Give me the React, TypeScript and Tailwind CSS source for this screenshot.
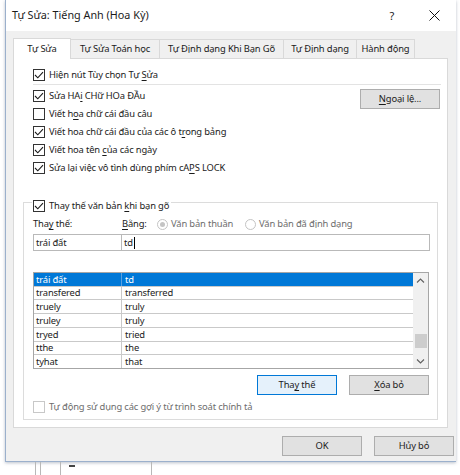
import type { ReactNode } from "react";

// Word's AutoCorrect dialog (Vietnamese UI), Windows 10 look.
const rows = [
  ["trái đất", "td"],
  ["transfered", "transferred"],
  ["truely", "truly"],
  ["truley", "truly"],
  ["tryed", "tried"],
  ["tthe", "the"],
  ["tyhat", "that"],
];

export default function App() {
  return (
    <div className="relative h-[475px] w-[460px] overflow-hidden whitespace-nowrap bg-white font-['Noto_Sans',sans-serif] text-[9.4px] leading-none tracking-[-0.15px] text-[#1b1b1b]">
      <div className="ml-[5px] flex h-[462px] w-[451px] flex-col border-b border-l border-[#9bb0cc] shadow-[0_1px_3px_rgba(60,80,110,0.35)]">
        {/* title bar */}
        <div className="flex h-[31px] shrink-0 items-center bg-white pl-[6px]">
          <span className="text-[10.8px] tracking-normal">Tự Sửa: Tiếng Anh (Hoa Kỳ)</span>
          <span className="ml-auto mr-[35px] text-[11px]">?</span>
          <svg width="11" height="11" viewBox="0 0 11 11" className="mr-[16px]">
            <path d="M0.5 0.5 L10.5 10.5 M10.5 0.5 L0.5 10.5" stroke="#111" strokeWidth="1" />
          </svg>
        </div>

        <div className="flex flex-1 flex-col bg-[#f0f0f0] pl-[7px] pt-[7px]">
          {/* tabs */}
          <div className="flex h-[20px] items-end">
            <div className="relative z-10 -mb-px flex h-[21px] w-[58px] items-center justify-center border border-b-0 border-[#d9d9d9] bg-white">
              Tự Sửa
            </div>
            <Tab w="w-[89px]">Tự Sửa Toán học</Tab>
            <Tab w="w-[124px]">Tự Định dạng Khi Bạn Gõ</Tab>
            <Tab w="w-[73px]">Tự Định dạng</Tab>
            <Tab w="w-[58px]">Hành động</Tab>
          </div>

          {/* tab page */}
          <div className="flex h-[370px] w-[435px] flex-col border border-[#d9d9d9] bg-white px-[9px] pt-[7px]">
            <div className="ml-[10px] mr-[-3px]">
              <CheckRow checked h="h-[18px]">
                Hiện nút Tùy chọn Tự <U>S</U>ửa
              </CheckRow>
              <div className="border-t border-[#e3e3e3]" />
              <div className="mt-[2px] flex">
                <div className="flex-1">
                  <CheckRow checked>
                    Sửa HA<U>i</U> CHữ HOa ĐẦu
                  </CheckRow>
                  <CheckRow>
                    Viết h<U>o</U>a chữ cái đầu câu
                  </CheckRow>
                  <CheckRow checked>
                    Viết hoa chữ cái đầu của các ô t<U>r</U>ong bảng
                  </CheckRow>
                  <CheckRow checked>
                    Viết hoa tên <U>c</U>ủa các ngày
                  </CheckRow>
                  <CheckRow checked>
                    Sửa lại việc vô tình dùng phím cA<U>P</U>S LOCK
                  </CheckRow>
                </div>
                <Btn className="mr-px mt-[2px]">
                  <U>N</U>goại lệ...
                </Btn>
              </div>
            </div>

            {/* replace group */}
            <div className="mt-[25px] flex h-[218px] flex-col border border-[#dcdcdc] pl-[9px] pr-[8px]">
              <div className="-ml-[1px] -mt-[5px] flex h-[15px] w-fit items-center gap-[4px] bg-white pl-px pr-[2px]">
                <Box checked />
                <span>
                  Thay thế văn bản <U>k</U>hi bạn gõ
                </span>
              </div>

              <div className="mt-[3px] flex h-[16px] items-center">
                <span className="w-[89px]">
                  Tha<U>y</U> thế:
                </span>
                <span className="w-[35px]">
                  <U>B</U>ằng:
                </span>
                <span className="flex w-[88px] items-center gap-[3px] text-[#6d6d6d]">
                  <Radio checked />
                  Văn bản thuần
                </span>
                <span className="flex items-center gap-[3px] text-[#6d6d6d]">
                  <Radio />
                  Văn bản đã định dạng
                </span>
              </div>

              <div className="mr-[-1px] mt-[2px] flex h-[17px]">
                <div className="flex w-[89px] items-center border border-[#b9b9b9] pl-[2px]">trái đất</div>
                <div className="flex flex-1 items-center border border-l-0 border-[#b9b9b9] pl-[2px]">
                  td<span className="ml-px h-[12px] w-px bg-black" />
                </div>
              </div>

              {/* list */}
              <div className="mt-[21px] flex h-[97px] border border-[#a6a6a6]">
                <div className="flex flex-1 flex-col">
                  {rows.map(([a, b], i) => (
                    <div
                      key={a}
                      className={`flex flex-1 ${i < rows.length - 1 ? "border-b border-[#c9c9c9]" : ""} ${
                        i === 0 ? "bg-[#0078d7] text-white" : ""
                      }`}
                    >
                      <span className={`flex w-[88px] items-center border-r pl-[2px] ${i === 0 ? "border-[#5aa0e0]" : "border-[#c9c9c9]"}`}>
                        {a}
                      </span>
                      <span className="flex flex-1 items-center pl-[3px]">{b}</span>
                    </div>
                  ))}
                </div>
                <div className="flex w-[15px] flex-col items-center bg-[#f0f0f0]">
                  <svg width="9" height="14" viewBox="0 0 9 14" className="mt-px">
                    <path d="M1 8.5 L4.5 5 L8 8.5" fill="none" stroke="#606060" strokeWidth="1.1" />
                  </svg>
                  <div className="mt-[46px] h-[14px] w-[12px] bg-[#cdcdcd]" />
                  <svg width="9" height="14" viewBox="0 0 9 14" className="mt-auto">
                    <path d="M1 5.5 L4.5 9 L8 5.5" fill="none" stroke="#606060" strokeWidth="1.1" />
                  </svg>
                </div>
              </div>

              <div className="mt-[6px] flex justify-end gap-[12px]">
                <Btn primary>
                  Tha<U>y</U> thế
                </Btn>
                <Btn>
                  <U>X</U>óa bỏ
                </Btn>
              </div>

              <div className="mt-[5px] flex h-[14px] items-center gap-[4px] text-[#6d6d6d]">
                <Box disabled />
                <span>Tự động sử dụng các gợi ý từ trình soát chính tả</span>
              </div>
            </div>
          </div>

          {/* footer */}
          <div className="mt-[8px] flex w-[441px] justify-end gap-[12px]">
            <Btn>OK</Btn>
            <Btn>Hủy bỏ</Btn>
          </div>
        </div>
      </div>

      {/* bits of the window behind */}
      <div className="flex h-[13px]">
        <span className="ml-[35px] h-full w-px bg-[#b8b8b8]" />
        <span className="ml-[4px] h-full w-px bg-[#b8b8b8]" />
        <span className="ml-[19px] h-full w-px bg-[#b8b8b8]" />
        <span className="ml-[8px] mt-[3px] h-[2px] w-[6px] bg-[#444]" />
        <span className="ml-[76px] h-full w-px bg-[#b8b8b8]" />
      </div>
    </div>
  );
}

function U({ children }: { children: ReactNode }) {
  return <span className="underline underline-offset-2">{children}</span>;
}

function Tab({ w, children }: { w: string; children: ReactNode }) {
  return (
    <div className={`flex h-[19px] ${w} items-center justify-center border border-b-0 border-l-0 border-[#d9d9d9] bg-[#f0f0f0]`}>
      {children}
    </div>
  );
}

function Box({ checked = false, disabled = false }: { checked?: boolean; disabled?: boolean }) {
  return (
    <span
      className={`flex h-[12px] w-[12px] shrink-0 items-center justify-center border bg-white ${
        disabled ? "border-[#c8c8c8]" : "border-[#333333]"
      }`}
    >
      {checked && (
        <svg width="10" height="10" viewBox="0 0 10 10" fill="none">
          <path d="M1 5 L3.8 7.8 L9 2.2" stroke="#1a1a1a" strokeWidth="1.1" />
        </svg>
      )}
    </span>
  );
}

function CheckRow({
  checked = false,
  h = "h-[18px]",
  children,
}: {
  checked?: boolean;
  h?: string;
  children: ReactNode;
}) {
  return (
    <div className={`flex ${h} items-center gap-[4px]`}>
      <Box checked={checked} />
      <span>{children}</span>
    </div>
  );
}

function Radio({ checked = false }: { checked?: boolean }) {
  return (
    <span className="flex h-[11px] w-[11px] shrink-0 items-center justify-center rounded-full border border-[#c4c4c4] bg-white">
      {checked && <span className="h-[5px] w-[5px] rounded-full bg-[#c4c4c4]" />}
    </span>
  );
}

function Btn({
  primary = false,
  className = "",
  children,
}: {
  primary?: boolean;
  className?: string;
  children: ReactNode;
}) {
  return (
    <div
      className={`flex h-[20px] w-[80px] shrink-0 items-center justify-center border ${
        primary ? "border-[#0078d7] bg-[#e5f1fb]" : "border-[#adadad] bg-[#e1e1e1]"
      } ${className}`}
    >
      <span>{children}</span>
    </div>
  );
}
